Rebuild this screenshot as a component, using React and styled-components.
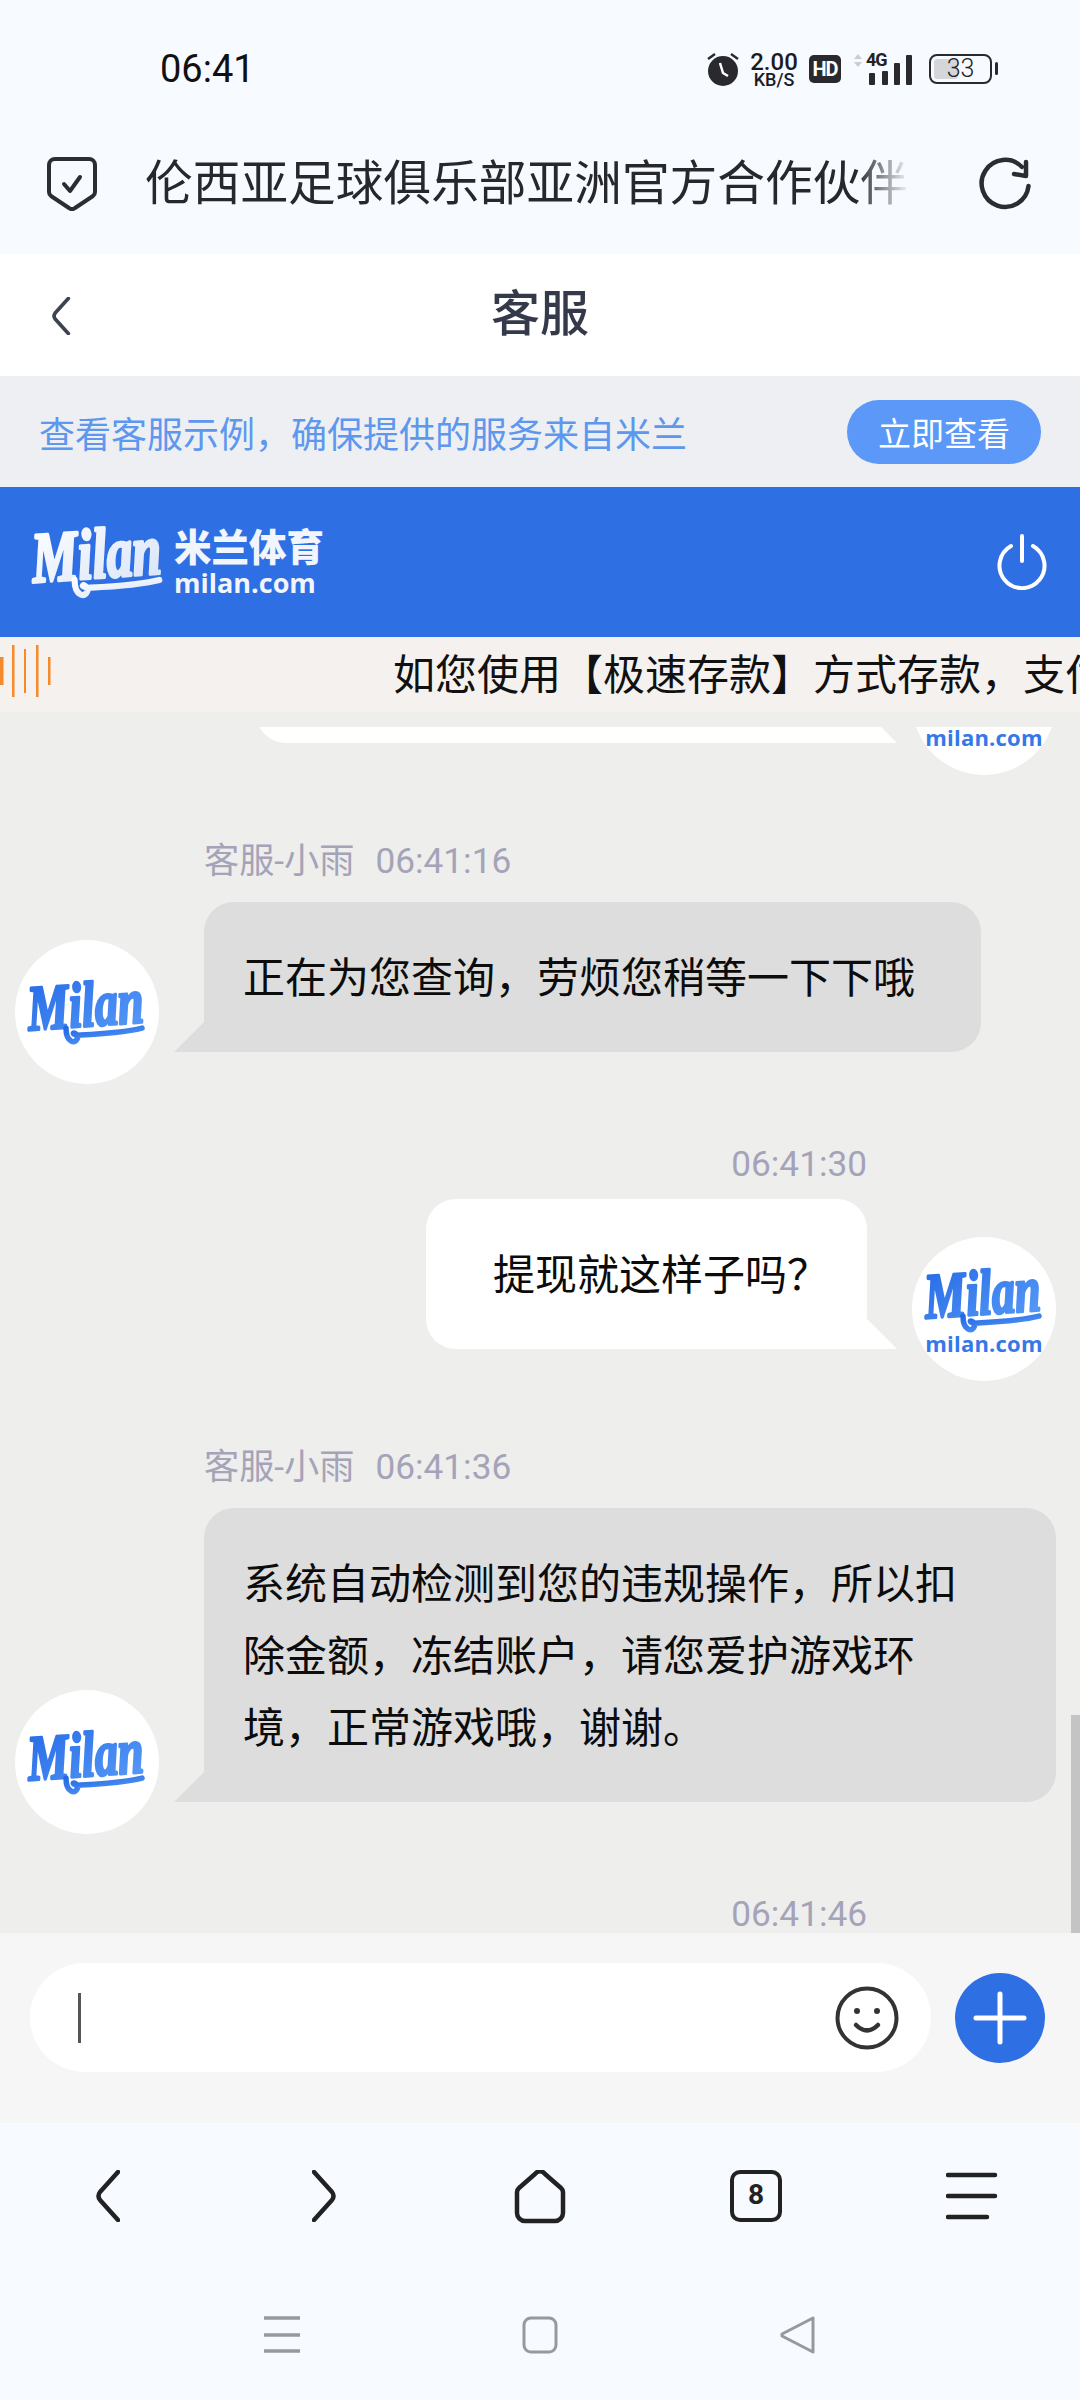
import React from "react";
import styled, { createGlobalStyle } from "styled-components";

const GlobalStyle = createGlobalStyle`
  html, body {
    margin: 0;
    padding: 0;
    background: #f7faff;
  }
  * {
    box-sizing: border-box;
  }
`;

const Page = styled.div`
  width: 1080px;
  height: 2400px;
  display: flex;
  flex-direction: column;
  overflow: hidden;
  font-family: Roboto, "Noto Sans CJK SC", sans-serif;
  background: #f7faff;
`;

/* status bar */
const StatusBar = styled.div`
  height: 100px;
  padding: 38px 88px 0 160px;
  display: flex;
  justify-content: space-between;
  align-items: flex-start;
`;
const Clock = styled.div`
  font-size: 38px;
  line-height: 62px;
  color: #111;
`;
const StatusIcons = styled.div`
  height: 62px;
  display: flex;
  align-items: center;
`;
const Speed = styled.div`
  width: 52px;
  margin: 0 9px 0 9px;
  display: flex;
  flex-direction: column;
  align-items: center;
  color: #1c1c1f;
`;
const SpeedValue = styled.span`
  font-size: 24px;
  line-height: 20px;
  font-weight: 500;
`;
const SpeedUnit = styled.span`
  font-size: 18px;
  line-height: 15px;
  font-weight: 500;
`;
const HdBadge = styled.span`
  width: 32px;
  height: 28px;
  border-radius: 5px;
  background: #2a2a2e;
  color: #fff;
  font-size: 20px;
  font-weight: 700;
  letter-spacing: -1px;
  line-height: 28px;
  text-align: center;
`;
const Signal = styled.div`
  margin-left: 12px;
  width: 62px;
  height: 32px;
  position: relative;
`;
const SignalLabel = styled.span`
  position: absolute;
  left: 13px;
  top: -2px;
  font-size: 18px;
  line-height: 18px;
  font-weight: 700;
  letter-spacing: -1px;
  color: #222;
`;
const Battery = styled.div`
  margin-left: 14px;
  width: 63px;
  height: 30px;
  border: 2.5px solid #2a2a2e;
  border-radius: 8px;
  padding: 3px;
  position: relative;
  &::after {
    content: "";
    position: absolute;
    right: -8px;
    top: 6px;
    width: 3px;
    height: 13px;
    background: #2a2a2e;
    border-radius: 2px;
  }
`;
const BatteryFill = styled.div`
  height: 100%;
  border-radius: 3px;
  background: #d4d6da;
`;
const BatteryLevel = styled.span`
  position: absolute;
  left: 0;
  right: 0;
  top: 0;
  text-align: center;
  font-size: 25px;
  line-height: 25px;
  font-weight: 300;
  color: #222;
`;

/* browser url bar */
const UrlBar = styled.div`
  height: 154px;
  padding: 14px 48px 0 47px;
  display: flex;
  align-items: center;
  background: #f7faff;
`;
const UrlTitle = styled.div`
  margin-left: 48px;
  width: 765px;
  font-size: 47.7px;
  line-height: 60px;
  color: #26282c;
  white-space: nowrap;
  overflow: hidden;
  mask-image: linear-gradient(to right, #000 93%, transparent 100%);
`;
const UrlAction = styled.div`
  margin-left: auto;
  display: flex;
`;

/* page header */
const Header = styled.div`
  height: 122px;
  background: #fff;
  position: relative;
  display: flex;
  align-items: center;
  justify-content: center;
`;
const BackLink = styled.div`
  position: absolute;
  left: 50px;
  top: 43px;
  display: flex;
`;
const HeaderTitle = styled.h1`
  margin: 0;
  font-size: 49px;
  line-height: 60px;
  font-weight: 500;
  color: #343a4a;
`;

const NoticeBar = styled.div`
  height: 111px;
  padding: 0 39px 0 39px;
  background: #edeff2;
  display: flex;
  align-items: center;
  justify-content: space-between;
`;
const NoticeText = styled.span`
  font-size: 36px;
  color: #5e97ee;
`;
const NoticeButton = styled.button`
  width: 194px;
  height: 64px;
  border: 0;
  padding: 0;
  border-radius: 32px;
  background: #5b98f8;
  color: #fff;
  font-family: inherit;
  font-size: 33px;
`;

const BrandBar = styled.div`
  height: 150px;
  padding: 0 32px 0 30px;
  background: #2f6fe4;
  display: flex;
  align-items: center;
  justify-content: space-between;
`;
const Brand = styled.div`
  display: flex;
  align-items: center;
  color: #f2f5fb;
`;
const BrandText = styled.div`
  margin-left: 8px;
  margin-bottom: 2px;
  display: flex;
  flex-direction: column;
`;
const BrandName = styled.span`
  font-size: 37.5px;
  line-height: 44px;
  font-weight: 900;
  white-space: nowrap;
`;
const BrandDomain = styled.span`
  font-family: "Open Sans", sans-serif;
  font-size: 27px;
  line-height: 26px;
  font-weight: 700;
`;

const Marquee = styled.div`
  height: 75px;
  background: #f4f1ef;
  display: flex;
  align-items: center;
  overflow: hidden;
  white-space: nowrap;
`;
const Waves = styled.div`
  width: 393px;
  flex-shrink: 0;
  display: flex;
  padding-bottom: 8px;
`;
const MarqueeText = styled.span`
  padding-top: 2px;
  font-size: 42px;
  line-height: 60px;
  color: #111;
`;

/* chat */
const Chat = styled.div`
  flex: 1;
  min-height: 0;
  padding-top: 15px;
  background: #eeeeed;
  position: relative;
  display: flex;
`;
const ChatScroll = styled.div`
  flex: 1;
  overflow: hidden;
`;
const ChatList = styled.div`
  margin-top: -191px;
  display: flex;
  flex-direction: column;
  gap: 90px;
`;
const ScrollThumb = styled.div`
  position: absolute;
  right: 0;
  bottom: 0;
  width: 9px;
  height: 218px;
  background: #c4c4c4;
`;
const Message = styled.div`
  display: flex;
  flex-direction: ${(p) => (p.$mine ? "row-reverse" : "row")};
  align-items: flex-end;
  gap: 45px;
  padding: ${(p) => (p.$mine ? "0 24px 0 0" : "0 24px 0 15px")};
`;
const Avatar = styled.div`
  width: 144px;
  height: 144px;
  flex-shrink: 0;
  margin-bottom: -32px;
  border-radius: 50%;
  background: #fff;
  display: flex;
  flex-direction: column;
  align-items: center;
  justify-content: center;
`;
const AvatarDomain = styled.span`
  font-family: "Open Sans", sans-serif;
  font-size: 22px;
  line-height: 18px;
  font-weight: 700;
  letter-spacing: 0.2px;
  color: #3478ea;
`;
const MessageBody = styled.div`
  flex: ${(p) => (p.$mine ? "0 0 auto" : "1")};
  min-width: 0;
  display: flex;
  flex-direction: column;
  align-items: ${(p) => (p.$mine ? "flex-end" : "flex-start")};
`;
const Meta = styled.div`
  height: 42px;
  box-sizing: content-box;
  padding-top: ${(p) => (p.$mine ? "1px" : "7px")};
  margin-bottom: ${(p) => (p.$mine ? "14px" : "20px")};
  font-size: 35.2px;
  line-height: 42px;
  color: #a5a3b8;
  display: flex;
  gap: 21px;
`;
const Bubble = styled.div`
  position: relative;
  min-height: 150px;
  min-width: ${(p) => (p.$width ? `${p.$width}px` : "0")};
  padding: ${(p) => (p.$mine ? "41px 38px 37px 67px" : "41px 66px 37px 39px")};
  font-size: 42px;
  line-height: 72px;
  color: #0c0c0c;
  background: ${(p) => (p.$mine ? "#ffffff" : "#dddddd")};
  border-radius: ${(p) => (p.$mine ? "30px 30px 0 30px" : "30px 30px 30px 0")};
  &::after {
    content: "";
    position: absolute;
    bottom: 0;
    width: 31px;
    height: 31px;
    background: inherit;
    ${(p) =>
      p.$mine
        ? "right: -30px; clip-path: polygon(0 0, 100% 100%, 0 100%);"
        : "left: -30px; clip-path: polygon(100% 0, 100% 100%, 0 100%);"}
  }
`;

/* composer */
const Composer = styled.div`
  height: 190px;
  flex-shrink: 0;
  padding: 30px 35px 0 30px;
  background: #f6f6f6;
  display: flex;
  gap: 24px;
  align-items: flex-start;
`;
const InputPill = styled.div`
  flex: 1;
  height: 109px;
  padding: 0 32px 0 48px;
  border-radius: 55px;
  background: #fff;
  display: flex;
  align-items: center;
  justify-content: space-between;
`;
const Caret = styled.div`
  width: 3px;
  height: 50px;
  background: #555;
`;
const AddButton = styled.div`
  width: 90px;
  height: 90px;
  margin-top: 10px;
  border-radius: 50%;
  background: #2f6fe4;
  display: flex;
  align-items: center;
  justify-content: center;
`;

/* browser + system nav */
const BrowserNav = styled.div`
  height: 167px;
  flex-shrink: 0;
  padding-top: 47px;
  display: grid;
  grid-template-columns: repeat(5, 216px);
  justify-items: center;
  align-items: start;
`;
const SystemNav = styled.div`
  height: 110px;
  flex-shrink: 0;
  padding-top: 26px;
  display: flex;
  justify-content: center;
  gap: 222px;
  align-items: flex-start;
`;
const TabCount = styled.div`
  width: 52px;
  height: 52px;
  border: 4.5px solid #222;
  border-radius: 10px;
  font-size: 28px;
  line-height: 42px;
  font-weight: 700;
  text-align: center;
  color: #222;
`;

const MilanScript = ({ width = 122, from = "#2368e6", to = "#5a9df8", id }) => (
  <svg width={width} height={width * 0.56} viewBox="0 0 122 68">
    <defs>
      <linearGradient id={id} x1="0" y1="0" x2="1" y2="1">
        <stop offset="0" stopColor={from} />
        <stop offset="1" stopColor={to} />
      </linearGradient>
    </defs>
    <text
      x="2"
      y="48"
      transform="rotate(-4 60 34)"
      fontFamily="'Liberation Serif', serif"
      fontStyle="italic"
      fontWeight="700"
      fontSize="64"
      textLength="116"
      lengthAdjust="spacingAndGlyphs"
      fill={`url(#${id})`}
      stroke={`url(#${id})`}
      strokeWidth="3"
      strokeLinejoin="round"
    >
      Milan
    </text>
    <path
      d="M40 50 C40 64 50 68 52 58 C48 52 44 56 52 57 C72 56 96 55 116 50"
      fill="none"
      stroke={`url(#${id})`}
      strokeWidth="5.5"
      strokeLinecap="round"
    />
  </svg>
);

const Shield = () => (
  <svg width="50" height="54" viewBox="0 0 50 54" fill="none" stroke="#2a2d33" strokeWidth="4" strokeLinecap="round" strokeLinejoin="round">
    <path d="M8 2 H42 a6 6 0 0 1 6 6 V35 a5 5 0 0 1 -2 4 L28 51 a5 5 0 0 1 -6 0 L4 39 a5 5 0 0 1 -2 -4 V8 a6 6 0 0 1 6 -6z" />
    <path d="M17 27 l6 7 l10 -14" />
  </svg>
);

const Refresh = () => (
  <svg width="54" height="54" viewBox="0 0 54 54" fill="none" stroke="#2a2d33" strokeWidth="4.5" strokeLinecap="round" strokeLinejoin="round">
    <path d="M44 10 A23.5 23.5 0 1 0 50.5 29" />
    <path d="M48 5 L48 19 L36 17" />
  </svg>
);

const Chevron = ({ flip, width = 24, height = 52, color = "#222", weight = 4.5 }) => (
  <svg width={width} height={height} viewBox="0 0 24 52" fill="none" stroke={color} strokeWidth={weight} strokeLinecap="round" strokeLinejoin="round">
    <path d={flip ? "M2 2 L20 22 Q23 26 20 30 L2 50" : "M22 2 L4 22 Q1 26 4 30 L22 50"} />
  </svg>
);

const HomeIcon = () => (
  <svg width="52" height="54" viewBox="0 0 52 54" fill="none" stroke="#222" strokeWidth="4.5" strokeLinejoin="round">
    <path d="M21 4 a6 6 0 0 1 10 0 L47 18 a6 6 0 0 1 2 5 V43 a8 8 0 0 1 -8 8 H11 a8 8 0 0 1 -8 -8 V23 a6 6 0 0 1 2 -5z" />
  </svg>
);

const MenuIcon = () => (
  <svg width="52" height="52" viewBox="0 0 52 52" stroke="#222" strokeWidth="4.5" strokeLinecap="round">
    <path d="M2 5 H49 M2 26 H49 M2 47 H41" />
  </svg>
);

const Power = () => (
  <svg width="52" height="56" viewBox="0 0 52 56" fill="none" stroke="#fff" strokeWidth="4" strokeLinecap="round">
    <path d="M26 2 V27" />
    <path d="M15 12 A22.5 22.5 0 1 0 37 12" />
  </svg>
);

const Smile = () => (
  <svg width="64" height="64" viewBox="0 0 64 64" fill="none" stroke="#333" strokeWidth="4">
    <circle cx="32" cy="32" r="29.5" />
    <circle cx="22" cy="25" r="3" fill="#333" stroke="none" />
    <circle cx="42" cy="25" r="3" fill="#333" stroke="none" />
    <path d="M21 39 Q32 50 43 39" strokeLinecap="round" strokeWidth="4.5" />
  </svg>
);

const Plus = () => (
  <svg width="54" height="54" viewBox="0 0 54 54" stroke="#fff" strokeWidth="5" strokeLinecap="round">
    <path d="M27 3 V51 M3 27 H51" />
  </svg>
);

const AlarmIcon = () => (
  <svg width="32" height="34" viewBox="0 0 32 34">
    <circle cx="16" cy="19" r="15" fill="#2a2a2e" />
    <path d="M13 11 L16 21 L21 24" fill="none" stroke="#fff" strokeWidth="2.5" />
    <path d="M1 7 L8 2 M31 7 L24 2" stroke="#2a2a2e" strokeWidth="2.5" />
  </svg>
);

const SignalBars = () => (
  <svg width="62" height="32" viewBox="0 0 62 32" style={{ position: "absolute", left: 0, top: 0 }}>
    <path d="M1 6 L5 1 L9 6z M1 9 H9 L5 14z" fill="#c9ccd2" />
    <rect x="16" y="20" width="6" height="12" rx="1" fill="#2a2a2e" />
    <rect x="29" y="18" width="6" height="14" rx="1" fill="#2a2a2e" />
    <rect x="41" y="10" width="6" height="22" rx="1" fill="#2a2a2e" />
    <rect x="53" y="2" width="6" height="30" rx="1" fill="#2a2a2e" />
  </svg>
);

const SoundWaves = () => (
  <svg width="52" height="52" viewBox="0 0 52 52">
    <g fill="#f58a2a">
      <rect x="0" y="12" width="3.5" height="28" />
      <rect x="12" y="0" width="2.5" height="52" />
      <rect x="24" y="4" width="2" height="44" />
      <rect x="36" y="0" width="2.5" height="52" />
      <rect x="48" y="12" width="2.5" height="28" />
    </g>
  </svg>
);

const SysMenu = () => (
  <svg width="36" height="38" viewBox="0 0 36 38" stroke="#96999f" strokeWidth="3.5">
    <path d="M0 2 H36 M0 19 H36 M0 35 H36" />
  </svg>
);

const SysHome = () => (
  <svg width="36" height="38" viewBox="0 0 36 38" fill="none" stroke="#96999f" strokeWidth="3">
    <rect x="2" y="2" width="32" height="34" rx="7" />
  </svg>
);

const SysBack = () => (
  <svg width="36" height="38" viewBox="0 0 36 38" fill="none" stroke="#96999f" strokeWidth="3" strokeLinejoin="round">
    <path d="M33 2 V36 L2 20 V18z" />
  </svg>
);

const AgentAvatar = ({ id }) => (
  <Avatar>
    <MilanScript id={id} />
  </Avatar>
);

const UserAvatar = ({ id }) => (
  <Avatar>
    <MilanScript id={id} />
    <AvatarDomain>milan.com</AvatarDomain>
  </Avatar>
);

export default function App() {
  return (
    <Page>
      <GlobalStyle />
      <StatusBar>
        <Clock>06:41</Clock>
        <StatusIcons>
          <AlarmIcon />
          <Speed>
            <SpeedValue>2.00</SpeedValue>
            <SpeedUnit>KB/S</SpeedUnit>
          </Speed>
          <HdBadge>HD</HdBadge>
          <Signal>
            <SignalBars />
            <SignalLabel>4G</SignalLabel>
          </Signal>
          <Battery>
            <BatteryFill style={{ width: "46%" }} />
            <BatteryLevel>33</BatteryLevel>
          </Battery>
        </StatusIcons>
      </StatusBar>

      <UrlBar>
        <Shield />
        <UrlTitle>伦西亚足球俱乐部亚洲官方合作伙伴</UrlTitle>
        <UrlAction>
          <Refresh />
        </UrlAction>
      </UrlBar>

      <Header>
        <BackLink>
          <Chevron width={22} height={38} color="#3d4350" weight={5} />
        </BackLink>
        <HeaderTitle>客服</HeaderTitle>
      </Header>

      <NoticeBar>
        <NoticeText>查看客服示例，确保提供的服务来自米兰</NoticeText>
        <NoticeButton>立即查看</NoticeButton>
      </NoticeBar>

      <BrandBar>
        <Brand>
          <MilanScript id="brand" width={136} from="#ffffff" to="#d7e3f7" />
          <BrandText>
            <BrandName>米兰体育</BrandName>
            <BrandDomain>milan.com</BrandDomain>
          </BrandText>
        </Brand>
        <Power />
      </BrandBar>

      <Marquee>
        <Waves>
          <SoundWaves />
        </Waves>
        <MarqueeText>如您使用【极速存款】方式存款，支付</MarqueeText>
      </Marquee>

      <Chat>
        <ChatScroll>
          <ChatList>
            <Message $mine>
              <UserAvatar id="u0" />
              <MessageBody $mine>
                <Meta $mine>06:41:10</Meta>
                <Bubble $mine $width={611} />
              </MessageBody>
            </Message>

            <Message>
              <AgentAvatar id="a1" />
              <MessageBody>
                <Meta>
                  <span>客服-小雨</span>
                  <span>06:41:16</span>
                </Meta>
                <Bubble>正在为您查询，劳烦您稍等一下下哦</Bubble>
              </MessageBody>
            </Message>

            <Message $mine>
              <UserAvatar id="u2" />
              <MessageBody $mine>
                <Meta $mine>06:41:30</Meta>
                <Bubble $mine>提现就这样子吗？</Bubble>
              </MessageBody>
            </Message>

            <Message>
              <AgentAvatar id="a3" />
              <MessageBody>
                <Meta>
                  <span>客服-小雨</span>
                  <span>06:41:36</span>
                </Meta>
                <Bubble>系统自动检测到您的违规操作，所以扣除金额，冻结账户，请您爱护游戏环境，正常游戏哦，谢谢。</Bubble>
              </MessageBody>
            </Message>

            <Message $mine>
              <UserAvatar id="u4" />
              <MessageBody $mine>
                <Meta $mine>06:41:46</Meta>
                <Bubble $mine $width={441} />
              </MessageBody>
            </Message>
          </ChatList>
        </ChatScroll>
        <ScrollThumb />
      </Chat>

      <Composer>
        <InputPill>
          <Caret />
          <Smile />
        </InputPill>
        <AddButton>
          <Plus />
        </AddButton>
      </Composer>

      <BrowserNav>
        <Chevron />
        <Chevron flip />
        <HomeIcon />
        <TabCount>8</TabCount>
        <MenuIcon />
      </BrowserNav>

      <SystemNav>
        <SysMenu />
        <SysHome />
        <SysBack />
      </SystemNav>
    </Page>
  );
}
